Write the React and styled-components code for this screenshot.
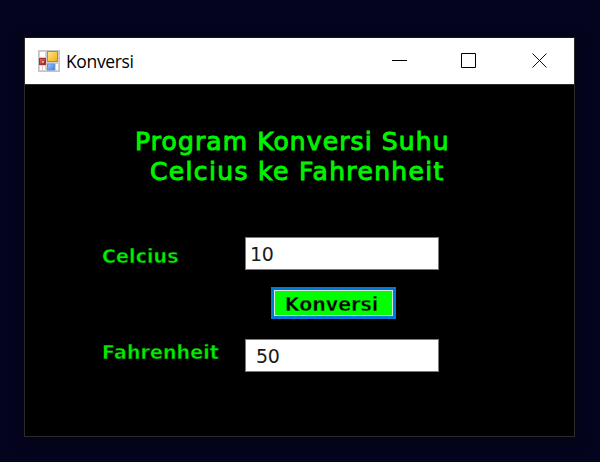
import React from "react";
import styled, { createGlobalStyle } from "styled-components";

const GlobalStyle = createGlobalStyle`
  * { box-sizing: border-box; }
  html, body { margin: 0; background: #04041e; }
`;

const Desktop = styled.main`
  width: 600px;
  height: 462px;
  padding: 37px 0 0 24px;
  overflow: hidden;
  background: #04041e;
  font-family: "DejaVu Sans", sans-serif;
`;

const Window = styled.section`
  width: 551px;
  height: 400px;
  display: flex;
  flex-direction: column;
  border: 1px solid #2b2b2b;
  border-top-color: #161620;
  background: #000;
  box-shadow: 0 3px 14px rgba(0, 0, 0, 0.35);
`;

const TitleBar = styled.header`
  flex: none;
  height: 47px;
  display: flex;
  align-items: center;
  background: #fff;
  border-bottom: 1px solid #2b2b2b;
  padding-left: 13px;
`;

const Caption = styled.h1`
  flex: 1;
  margin: 0 0 0 6px;
  font: 400 17.5px/24px "Open Sans", sans-serif;
  letter-spacing: -0.35px;
  color: #000;
`;

const CaptionButton = styled.button`
  width: 70px;
  height: 46px;
  padding: 0 0 0 ${(p) => p.$shift || "0"};
  border: 0;
  background: none;
  display: flex;
  align-items: center;
  justify-content: center;
`;

const Form = styled.div`
  display: flex;
  flex-direction: column;
  padding: 42px 0 0 77px;
`;

const Heading = styled.h2`
  margin: 0 0 0 33px;
  font-size: 25px;
  font-weight: 400;
  line-height: 30px;
  letter-spacing: ${(p) => p.$spacing};
  padding-left: ${(p) => p.$indent};
  color: #00f400;
  -webkit-text-stroke: 0.95px #00f400;
  white-space: pre;
`;

const Row = styled.div`
  display: grid;
  grid-template-columns: 143px 194px;
  height: 33px;
  margin-top: ${(p) => p.$gap};
`;

const Label = styled.label`
  font-size: 19px;
  font-weight: 700;
  line-height: 24px;
  padding-top: ${(p) => p.$drop};
  letter-spacing: 0.1px;
  color: #00ec00;
  -webkit-text-stroke: 0.4px #000;
`;

const Field = styled.input`
  width: 194px;
  height: 33px;
  border: 1px solid #7a7a7a;
  border-radius: 0;
  outline: 0;
  padding: 1px 4px 0 ${(p) => p.$inset};
  background: #fff;
  color: #1a1a1a;
  font: 400 19px "DejaVu Sans", sans-serif;
  letter-spacing: -0.3px;
`;

const ConvertButton = styled.button`
  width: 125px;
  height: 32px;
  margin: 17px 0 0 169px;
  padding: 1px 4px 0 0;
  border: 3px solid #0078d7;
  box-shadow: inset 0 0 0 1px #d8e8d8;
  background: #00ff00;
  color: #000;
  font: 700 19px/24px "DejaVu Sans", sans-serif;
  -webkit-text-stroke: 0.4px #00ff00;
`;

const AppIcon = () => (
  <svg width="22" height="22" viewBox="0 0 22 22">
    <defs>
      <linearGradient id="gold" x2="1" y2="1">
        <stop stopColor="#ffe78c" /><stop offset="1" stopColor="#f0b010" />
      </linearGradient>
      <linearGradient id="red" x2="1" y2="1">
        <stop stopColor="#e87868" /><stop offset="1" stopColor="#a01010" />
      </linearGradient>
      <linearGradient id="blue" x2="1" y2="1">
        <stop stopColor="#a8ccff" /><stop offset="1" stopColor="#3c78e0" />
      </linearGradient>
    </defs>
    <rect x="0.5" y="0.5" width="21" height="21" fill="#cfcfcf" stroke="#c4c4c4" />
    <path d="M2 2h5v5H2zM2 16h2v4H2zM5 16h2v4H5zM18 14h2v6h-2z" fill="#fff" />
    <rect x="9.5" y="1.5" width="10" height="10" fill="url(#gold)" stroke="#b88c28" />
    <rect x="1.5" y="8.5" width="6" height="6" fill="url(#red)" stroke="#a83028" />
    <rect x="4" y="11" width="2" height="2" fill="#e8a098" />
    <rect x="9.5" y="14" width="7" height="6" fill="url(#blue)" stroke="#6490dc" />
  </svg>
);

const App = () => (
  <>
    <GlobalStyle />
    <Desktop>
      <Window>
        <TitleBar>
          <AppIcon />
          <Caption>Konversi</Caption>
          <CaptionButton aria-label="Minimize" $shift="2px">
            <svg width="16" height="16"><path d="M0 7.5h15" stroke="#000" /></svg>
          </CaptionButton>
          <CaptionButton aria-label="Maximize">
            <svg width="16" height="16"><path d="M.5.5h14v14H.5z" fill="none" stroke="#000" /></svg>
          </CaptionButton>
          <CaptionButton aria-label="Close" $shift="2px">
            <svg width="16" height="16"><path d="M.5.5l14 14M14.5.5l-14 14" stroke="#000" strokeWidth="0.95" /></svg>
          </CaptionButton>
        </TitleBar>
        <Form>
          <Heading $spacing="1.1px" $indent="0">Program Konversi Suhu</Heading>
          <Heading $spacing="1.35px" $indent="15px">Celcius ke Fahrenheit</Heading>
          <Row $gap="50px">
            <Label $drop="7px">Celcius</Label>
            <Field $inset="4px" defaultValue="10" />
          </Row>
          <ConvertButton>Konversi</ConvertButton>
          <Row $gap="20px">
            <Label $drop="1px">Fahrenheit</Label>
            <Field $inset="10px" defaultValue="50" />
          </Row>
        </Form>
      </Window>
    </Desktop>
  </>
);

export default App;
